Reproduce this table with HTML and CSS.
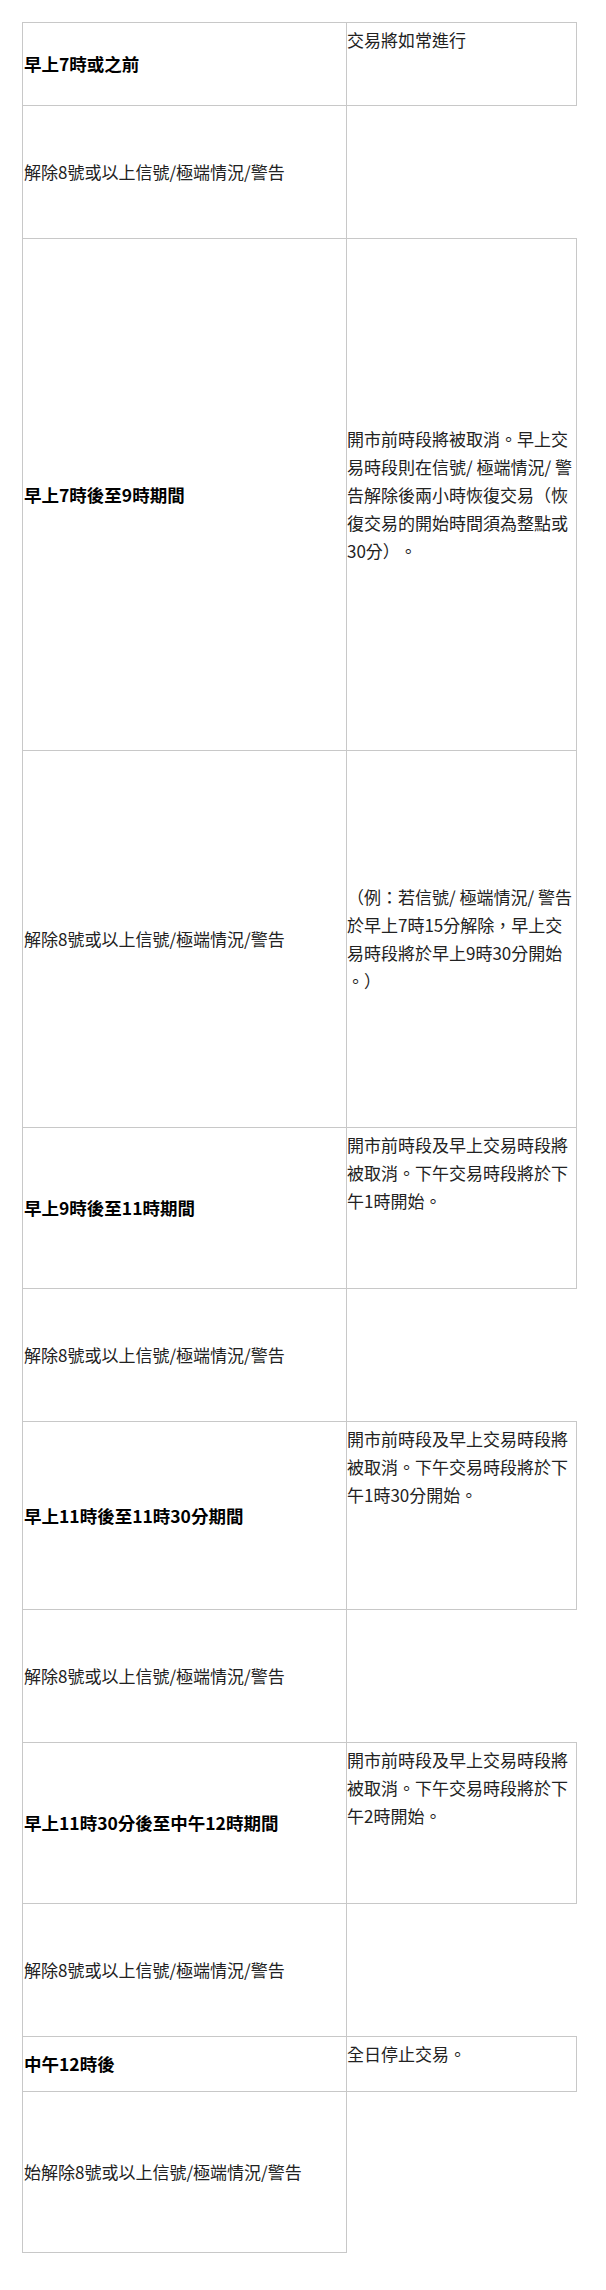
FILE: index.html
```html
<!DOCTYPE html>
<html lang="zh-Hant">
<head>
<meta charset="utf-8">
<title>惡劣天氣交易安排</title>
<link rel="stylesheet" href="styles.css">
</head>
<body>
<div class="page">
<table class="sched">
  <colgroup><col class="c-left"><col class="c-right"></colgroup>
  <tr class="h83">
    <td class="lab"><strong>早上7時或之前</strong></td>
    <td class="note top">交易將如常進行</td>
  </tr>
  <tr class="h133">
    <td class="lab">解除8號或以上信號/極端情況/警告</td>
  </tr>
  <tr class="h512">
    <td class="lab"><strong>早上7時後至9時期間</strong></td>
    <td class="note">開市前時段將被取消。早上交<br>易時段則在信號/ 極端情況/ 警<br>告解除後兩小時恢復交易（恢<br>復交易的開始時間須為整點或<br>30分）。</td>
  </tr>
  <tr class="h377">
    <td class="lab">解除8號或以上信號/極端情況/警告</td>
    <td class="note">（例：若信號/ 極端情況/ 警告<br>於早上7時15分解除，早上交<br>易時段將於早上9時30分開始<br>。）</td>
  </tr>
  <tr class="h161">
    <td class="lab"><strong>早上9時後至11時期間</strong></td>
    <td class="note top">開市前時段及早上交易時段將<br>被取消。下午交易時段將於下<br>午1時開始。</td>
  </tr>
  <tr class="h133">
    <td class="lab">解除8號或以上信號/極端情況/警告</td>
  </tr>
  <tr class="h188">
    <td class="lab"><strong>早上11時後至11時30分期間</strong></td>
    <td class="note top">開市前時段及早上交易時段將<br>被取消。下午交易時段將於下<br>午1時30分開始。</td>
  </tr>
  <tr class="h133">
    <td class="lab">解除8號或以上信號/極端情況/警告</td>
  </tr>
  <tr class="h161">
    <td class="lab"><strong>早上11時30分後至中午12時期間</strong></td>
    <td class="note top">開市前時段及早上交易時段將<br>被取消。下午交易時段將於下<br>午2時開始。</td>
  </tr>
  <tr class="h133">
    <td class="lab">解除8號或以上信號/極端情況/警告</td>
  </tr>
  <tr class="h55">
    <td class="lab"><strong>中午12時後</strong></td>
    <td class="note top">全日停止交易。</td>
  </tr>
  <tr class="h161">
    <td class="lab">始解除8號或以上信號/極端情況/警告</td>
  </tr>
</table>
</div>
</body>
</html>
```

FILE: styles.css
```css
html, body {
  margin: 0;
  padding: 0;
  background: #ffffff;
}

body {
  font-family: "Noto Sans CJK TC", "Noto Sans", sans-serif;
  color: #222222;
  text-spacing-trim: space-all;
}

.page {
  padding: 22px 0 0 22px;
}

.sched {
  border-collapse: collapse;
  table-layout: fixed;
  width: 554px;
}

.c-left { width: 324px; }
.c-right { width: 230px; }

.sched td {
  border: 1px solid #c8c8c8;
  padding: 0 0 0 1px;
  vertical-align: middle;
}

.lab {
  font-size: 17px;
  line-height: 28px;
  white-space: nowrap;
}

.lab strong {
  font-size: 17.5px;
  font-weight: 700;
  color: #000000;
}

.note {
  font-size: 17px;
  line-height: 28px;
  white-space: nowrap;
}

.sched td.note { padding-left: 0; }
.sched td.top { vertical-align: top; padding-top: 3px; }

.h55 { height: 55px; }
.h83 { height: 83px; }
.h133 { height: 133px; }
.h161 { height: 161px; }
.h188 { height: 188px; }
.h377 { height: 377px; }
.h512 { height: 512px; }
```
